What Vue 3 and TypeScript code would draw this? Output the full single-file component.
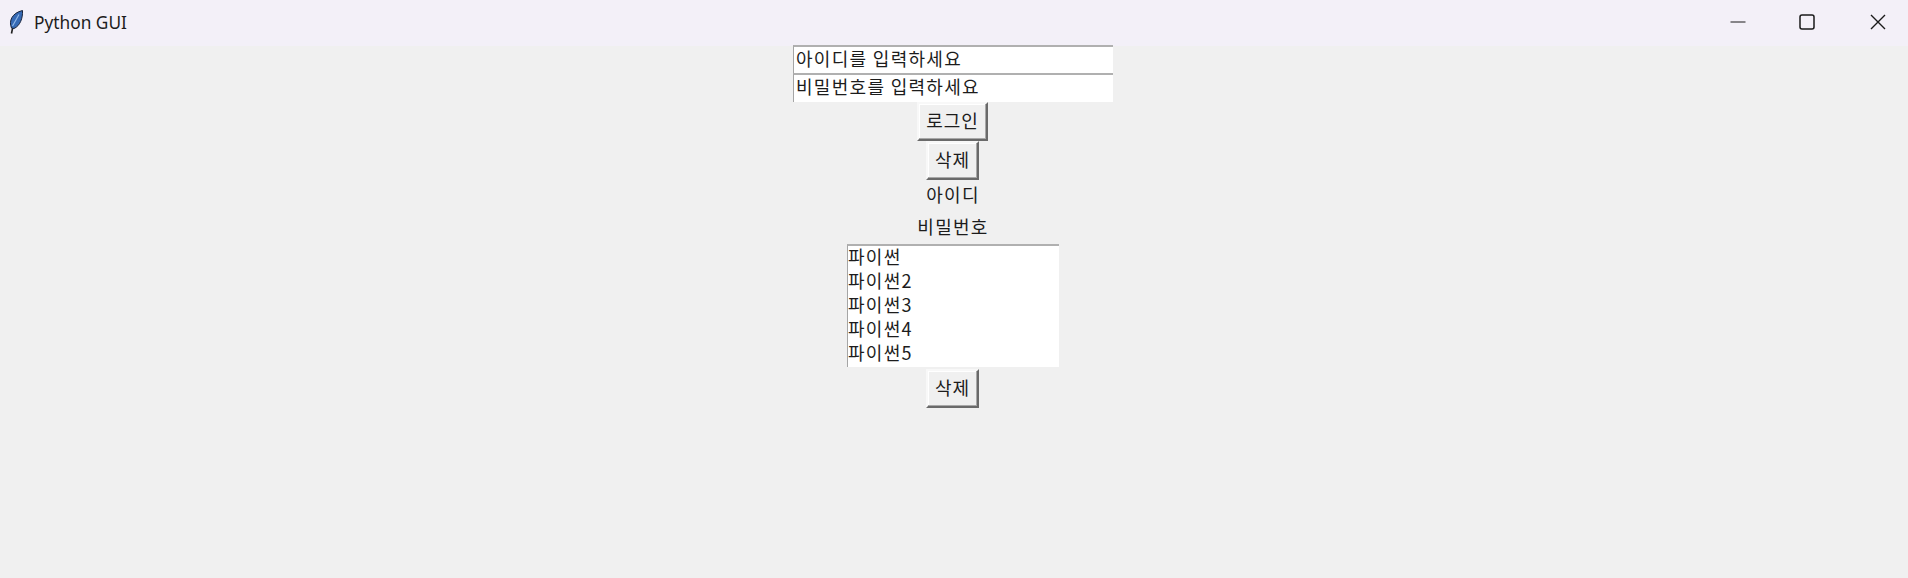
<script setup lang="ts">
const items: string[] = ['파이썬', '파이썬2', '파이썬3', '파이썬4', '파이썬5']
</script>

<template>
  <div class="window">
    <header class="titlebar">
      <svg class="feather" width="14" height="24" viewBox="0 0 14 24">
        <path d="M2.5 23.5 L4 16" stroke="#1c1c1c" stroke-width="1.6" fill="none" />
        <path d="M2.5 18 C-0.5 11 3 3 13.5 0.5 C14 8 11 16 5 18.5 Z" fill="#3569b4" stroke="#18233a" stroke-width="1" />
        <path d="M3.5 16 L10 4.5" stroke="#8fb6e6" stroke-width="1.2" fill="none" />
      </svg>
      <span class="title">Python GUI</span>
      <div class="controls">
        <button class="ctl">
          <svg width="16" height="16" viewBox="0 0 16 16"><path d="M0.5 8 H15.5" stroke="#1a1a1a" fill="none" /></svg>
        </button>
        <button class="ctl max">
          <svg width="16" height="16" viewBox="0 0 16 16"><rect x="1" y="1" width="14" height="14" rx="2" stroke="#1a1a1a" stroke-width="1.5" fill="none" /></svg>
        </button>
        <button class="ctl">
          <svg width="16" height="16" viewBox="0 0 16 16"><path d="M1 1 L15 15 M15 1 L1 15" stroke="#1a1a1a" stroke-width="1.4" fill="none" /></svg>
        </button>
      </div>
    </header>

    <main class="content">
      <input class="entry" value="아이디를 입력하세요" />
      <input class="entry second" value="비밀번호를 입력하세요" />
      <button class="tkbtn login">로그인</button>
      <button class="tkbtn del">삭제</button>
      <div class="label first">아이디</div>
      <div class="label">비밀번호</div>
      <ul class="listbox">
        <li v-for="item in items" :key="item">{{ item }}</li>
      </ul>
      <button class="tkbtn del">삭제</button>
    </main>
  </div>
</template>

<style scoped>
.window {
  width: 1908px;
  height: 578px;
  background: #f0f0f0;
  overflow: hidden;
  font-family: "Noto Sans CJK KR", "Noto Sans", sans-serif;
  color: #1c1c1c;
}

.titlebar {
  height: 46px;
  background: #f3f0f8;
  display: flex;
  align-items: center;
  padding-left: 9px;
}

.feather {
  flex: none;
  margin-top: -3px;
}

.title {
  margin: -2px 0 0 11px;
  font-size: 17.3px;
  font-family: "Noto Sans", sans-serif;
}

.controls {
  margin-left: auto;
  display: flex;
  gap: 10px;
  height: 100%;
}

.ctl {
  width: 60px;
  height: 100%;
  border: 0;
  padding: 0 0 3px;
  background: transparent;
  display: flex;
  align-items: center;
  justify-content: center;
}

.max {
  margin: 0 1px 0 -1px;
}

.content {
  display: flex;
  flex-direction: column;
  align-items: center;
  margin-top: -1px;
  padding-right: 2px;
}

.entry {
  box-sizing: border-box;
  width: 320px;
  height: 28px;
  padding: 0 0 4px 2px;
  border: 0;
  border-top: 2px solid #b0b0b0;
  border-left: 1px solid #a5a5a5;
  background: #fff;
  font: inherit;
  font-size: 18px;
  letter-spacing: 1.3px;
  color: #1c1c1c;
  outline: none;
}

.second {
  height: 29px;
  padding-bottom: 6px;
}

.tkbtn {
  box-sizing: border-box;
  height: 39px;
  padding: 0 0 3px;
  margin-right: 1px;
  background: #f0f0f0;
  border: 2px solid;
  border-color: #f8f8f8 #6a6a6a #6a6a6a #f8f8f8;
  box-shadow: inset -1px -1px 0 #a8a8a8, inset 1px 1px 0 #fff;
  font: inherit;
  font-size: 18px;
  letter-spacing: 1px;
  color: #1c1c1c;
}

.login {
  width: 71px;
}

.del {
  width: 53px;
}

.label {
  height: 33px;
  line-height: 35px;
  font-size: 18px;
  letter-spacing: 1.3px;
}

.first {
  height: 29px;
  line-height: 29px;
}

.listbox {
  box-sizing: border-box;
  width: 212px;
  height: 123px;
  margin: 2px 0;
  padding: 0;
  list-style: none;
  background: #fff;
  border-top: 2px solid #b0b0b0;
  border-left: 1px solid #a5a5a5;
  font-size: 18px;
  letter-spacing: 1.3px;
}

.listbox li {
  height: 24px;
  line-height: 20px;
}
</style>
